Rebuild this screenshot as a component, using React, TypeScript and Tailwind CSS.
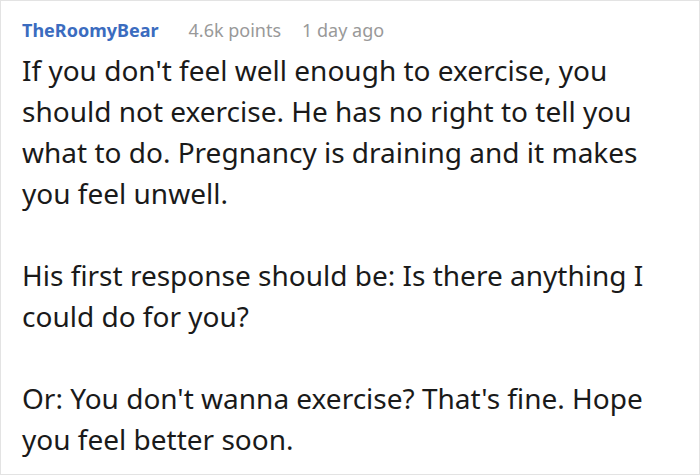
import React from "react";

export default function App() {
  return (
    <div className="w-[700px] h-[475px] bg-white border border-[#e3e3e3] box-border pl-[21px] pr-4 pt-[15px]" style={{ fontFamily: '"Noto Sans", sans-serif' }}>
      <div className="flex items-baseline text-[18px] leading-[28px]">
        <span className="font-bold text-[#3b6cbf]">TheRoomyBear</span>
        <span className="ml-[30px] text-[#999999]">4.6k points</span>
        <span className="ml-[21px] text-[#999999]">1 day ago</span>
      </div>
      <div className="mt-[6px] text-[28px] leading-[41px] text-[#1a1a1a]">
        <p>If you don't feel well enough to exercise, you should not exercise. He has no right to tell you what to do. Pregnancy is draining and it makes you feel unwell.</p>
        <p className="mt-[41px]">His first response should be: Is there anything I could do for you?</p>
        <p className="mt-[41px]">Or: You don't wanna exercise? That's fine. Hope you feel better soon.</p>
      </div>
    </div>
  );
}
